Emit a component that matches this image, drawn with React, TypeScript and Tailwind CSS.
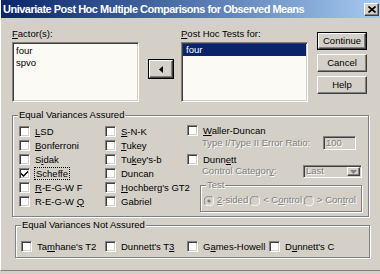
import React from 'react';

const sunken =
  'border border-t-[#808080] border-l-[#808080] border-r-white border-b-white shadow-[inset_1px_1px_0_#404040,inset_-1px_-1px_0_#d4d0c8]';
const raised =
  'border border-t-white border-l-white border-r-[#404040] border-b-[#404040] shadow-[inset_-1px_-1px_0_#808080]';
const etched = 'border border-[#808080] shadow-[inset_1px_1px_0_#fff,1px_1px_0_#fff]';
const dimText = 'text-[#808080] [text-shadow:1px_1px_0_#fff]';

// label with one underlined mnemonic letter
const Mn = ({ text, u }: { text: string; u?: number }) => {
  if (u === undefined) return <>{text}</>;
  return (
    <>
      {text.slice(0, u)}
      <u className="underline-offset-1">{text[u]}</u>
      {text.slice(u + 1)}
    </>
  );
};

const Check = ({ label, u, checked, focus }: { label: string; u?: number; checked?: boolean; focus?: boolean }) => (
  <div className="flex items-center gap-[5px] h-[14px] whitespace-nowrap">
    <div className={`w-[11px] h-[11px] shrink-0 bg-white flex items-center justify-center ${sunken}`}>
      {checked && (
        <svg width="7" height="7" viewBox="0 0 7 7">
          <path d="M0 2.5 L2.5 5 L7 0.5 L7 2.5 L2.5 7 L0 4.5 Z" fill="#000" />
        </svg>
      )}
    </div>
    <span className={`leading-[11px] ${focus ? 'outline outline-1 outline-dotted outline-black px-[1px]' : ''}`}>
      <Mn text={label} u={u} />
    </span>
  </div>
);

const Radio = ({ label, u, on }: { label: string; u?: number; on?: boolean }) => (
  <div className="flex items-center gap-[3px] whitespace-nowrap">
    <svg width="10" height="10" viewBox="0 0 10 10" className="shrink-0">
      <circle cx="5" cy="5" r="4.5" fill="#d4d0c8" />
      <path d="M1.5 8.5 A4.5 4.5 0 0 1 8.5 1.5" stroke="#808080" strokeWidth="1" fill="none" />
      <path d="M8.5 1.5 A4.5 4.5 0 0 1 1.5 8.5" stroke="#fff" strokeWidth="1" fill="none" />
      {on && <circle cx="5" cy="5" r="1.6" fill="#808080" />}
    </svg>
    <span className={dimText}>
      <Mn text={label} u={u} />
    </span>
  </div>
);

const Button = ({ label, isDefault }: { label: string; isDefault?: boolean }) => (
  <div className={`w-[50px] h-[18px] ${isDefault ? 'border border-black' : ''}`}>
    <div className={`w-full h-full flex items-center justify-center ${raised}`}>{label}</div>
  </div>
);

const Legend = ({ children, className = '' }: { children: React.ReactNode; className?: string }) => (
  <span className={`absolute top-[-7px] bg-[#d4d0c8] px-[1px] leading-[12px] ${className}`}>{children}</span>
);

export default function App() {
  return (
    <div className="w-[380px] h-[274px] bg-[#d4d0c8] overflow-hidden font-['Liberation_Sans',Arial,sans-serif] text-[9.5px] text-black">
      <div className="h-[271px] flex flex-col border-b border-[#808080] border-l border-l-white">
        {/* title bar */}
        <div className="h-[18px] shrink-0 flex items-center justify-between pl-[2px] pr-[1px] bg-gradient-to-r from-[#0a246a] to-[#a6caf0]">
          <span className="text-white font-bold text-[11px] tracking-[-0.5px] whitespace-nowrap">
            Univariate Post Hoc Multiple Comparisons for Observed Means
          </span>
          <div className={`w-[15px] h-[13px] bg-[#d4d0c8] flex items-center justify-center ${raised}`}>
            <svg width="8" height="7" viewBox="0 0 8 7">
              <path d="M0.5 0.5 L7.5 6.5 M7.5 0.5 L0.5 6.5" stroke="#000" strokeWidth="1.6" />
            </svg>
          </div>
        </div>

        <div className="flex flex-col pl-[11px] pt-[9px]">
          {/* list row */}
          <div className="flex items-start">
            <div className="flex flex-col w-[127px]">
              <div className="h-[13px] leading-[13px]">
                <Mn text="Factor(s):" u={0} />
              </div>
              <div className={`mt-[2px] h-[60px] bg-[#fbfaf4] pl-[2px] pt-[2px] ${sunken}`}>
                <div className="h-[12px] leading-[12px] pl-[1px]">four</div>
                <div className="h-[12px] leading-[12px] pl-[1px]">spvo</div>
              </div>
            </div>

            <div className="ml-[9px] mt-[32px] w-[26px] h-[20px] border border-black">
              <div className={`w-full h-full flex items-center justify-center ${raised}`}>
                <svg width="4" height="7" viewBox="0 0 4 7">
                  <path d="M4 0 L0 3.5 L4 7 Z" fill="#000" />
                </svg>
              </div>
            </div>

            <div className="ml-[7px] flex flex-col w-[127px]">
              <div className="h-[13px] leading-[13px]">
                <Mn text="Post Hoc Tests for:" u={0} />
              </div>
              <div className={`mt-[2px] h-[60px] bg-[#fbfaf4] p-[1px] ${sunken}`}>
                <div className="h-[12px] leading-[12px] bg-[#0a246a] text-white pl-[3px]">four</div>
              </div>
            </div>

            <div className="ml-[9px] mt-[5px] flex flex-col gap-[4px]">
              <Button label="Continue" isDefault />
              <Button label="Cancel" />
              <Button label="Help" />
            </div>
          </div>

          {/* equal variances assured */}
          <div className={`relative mt-[13px] w-[357px] h-[102px] ${etched}`}>
            <Legend className="left-[5px]">Equal Variances Assured</Legend>
            <div className="flex pt-[8px] pl-[6px]">
              <div className="w-[86px] flex flex-col">
                <Check label="LSD" u={0} />
                <Check label="Bonferroni" u={0} />
                <Check label="Sidak" u={1} />
                <Check label="Scheffe" checked focus />
                <Check label="R-E-G-W F" u={0} />
                <Check label="R-E-G-W Q" u={8} />
              </div>
              <div className="w-[82px] flex flex-col">
                <Check label="S-N-K" u={0} />
                <Check label="Tukey" u={0} />
                <Check label="Tukey's-b" u={2} />
                <Check label="Duncan" />
                <Check label="Hochberg's GT2" u={0} />
                <Check label="Gabriel" />
              </div>
              <div className="w-[175px] flex flex-col">
                <div className="h-[12px] flex items-center">
                  <Check label="Waller-Duncan" u={0} />
                </div>
                <div className="h-[14px] flex items-center justify-between pl-[15px] pr-[6px]">
                  <span className={dimText}>Type I/Type II Error Ratio:</span>
                  <div className={`w-[33px] h-[14px] flex items-center pl-[2px] bg-[#d4d0c8] ${sunken} ${dimText}`}>100</div>
                </div>
                <div className="mt-[4px] h-[11px] flex items-center">
                  <Check label="Dunnett" u={4} />
                </div>
                <div className="h-[13px] flex items-center justify-between pl-[15px]">
                  <span className={dimText}>
                    <Mn text="Control Category:" u={15} />
                  </span>
                  <div className={`w-[59px] h-[13px] flex items-center justify-between bg-[#d4d0c8] pl-[2px] pr-[1px] ${sunken}`}>
                    <span className={dimText}>Last</span>
                    <div className={`w-[13px] h-[9px] flex items-center justify-center ${raised}`}>
                      <svg width="7" height="4" viewBox="0 0 7 4">
                        <path d="M0 0 L7 0 L3.5 4 Z" fill="#808080" />
                      </svg>
                    </div>
                  </div>
                </div>
                <div className={`relative mt-[7px] ml-[13px] w-[162px] h-[27px] ${etched}`}>
                  <Legend className={`left-[5px] ${dimText}`}>Test</Legend>
                  <div className="flex items-center h-full pt-[4px] pl-[3px] gap-[2px]">
                    <Radio label="2-sided" u={0} on />
                    <Radio label="< Control" u={3} />
                    <Radio label="> Control" u={5} />
                  </div>
                </div>
              </div>
            </div>
          </div>

          {/* equal variances not assured */}
          <div className={`relative mt-[8px] ml-[3px] w-[355px] h-[33px] ${etched}`}>
            <Legend className="left-[5px]">Equal Variances Not Assured</Legend>
            <div className="flex pt-[13px] pl-[5px]">
              <div className="w-[84px]">
                <Check label="Tamhane's T2" u={2} />
              </div>
              <div className="w-[82px]">
                <Check label="Dunnett's T3" u={11} />
              </div>
              <div className="w-[82px]">
                <Check label="Games-Howell" u={1} />
              </div>
              <div>
                <Check label="Dunnett's C" u={1} />
              </div>
            </div>
          </div>
        </div>
      </div>
    </div>
  );
}
